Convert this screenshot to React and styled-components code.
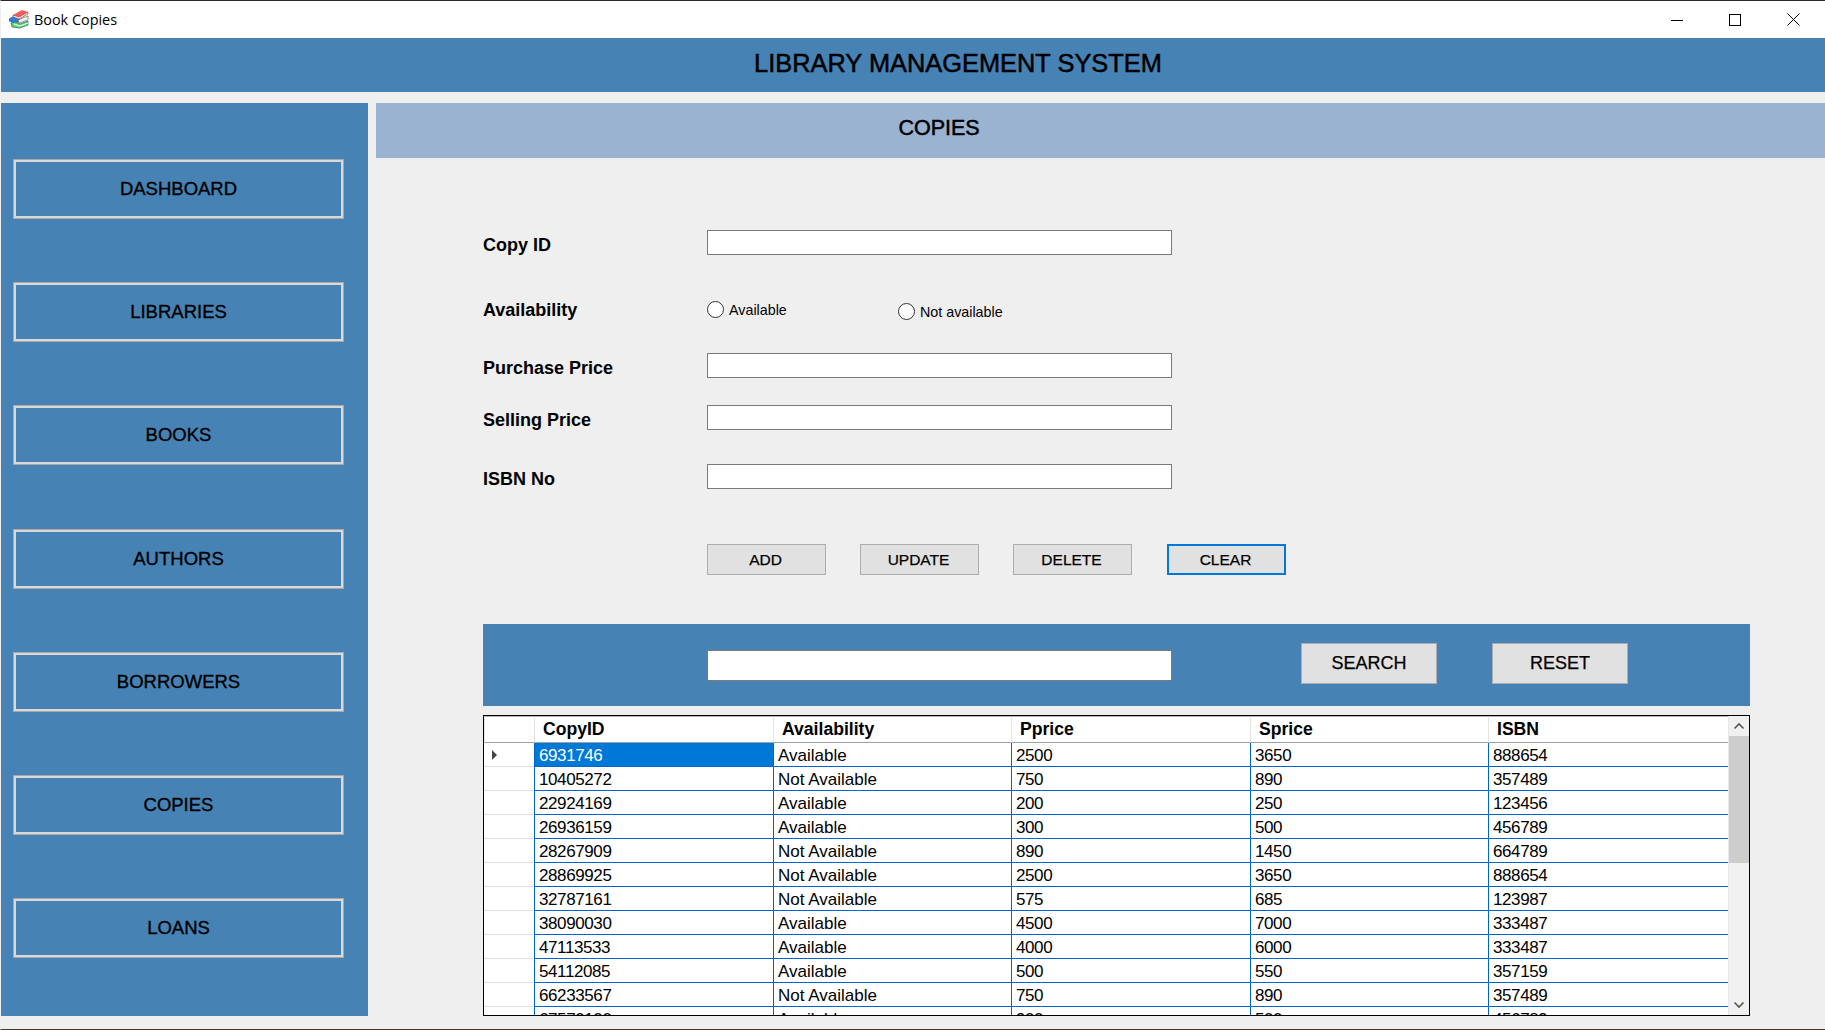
import React from "react";
import styled, { createGlobalStyle } from "styled-components";

const navItems = ["DASHBOARD", "LIBRARIES", "BOOKS", "AUTHORS", "BORROWERS", "COPIES", "LOANS"];

const copies = [
  ["6931746", "Available", "2500", "3650", "888654"],
  ["10405272", "Not Available", "750", "890", "357489"],
  ["22924169", "Available", "200", "250", "123456"],
  ["26936159", "Available", "300", "500", "456789"],
  ["28267909", "Not Available", "890", "1450", "664789"],
  ["28869925", "Not Available", "2500", "3650", "888654"],
  ["32787161", "Not Available", "575", "685", "123987"],
  ["38090030", "Available", "4500", "7000", "333487"],
  ["47113533", "Available", "4000", "6000", "333487"],
  ["54112085", "Available", "500", "550", "357159"],
  ["66233567", "Not Available", "750", "890", "357489"],
  ["67570100", "Available", "900", "500", "456789"],
];

const GlobalStyle = createGlobalStyle`
  html, body {
    margin: 0;
    padding: 0;
    background: #efefef;
  }
  * {
    box-sizing: border-box;
  }
`;

const Win = styled.div`
  width: 1825px;
  height: 1030px;
  overflow: hidden;
  background: #efefef;
  border-top: 1px solid #2b2b2b;
  border-bottom: 1px solid #4a3426;
  border-left: 1px solid #efefef;
  font-family: "Liberation Sans", Arial, sans-serif;
  color: #000;
`;

const TitleBar = styled.div`
  height: 37px;
  margin-left: -1px;
  background: #fff;
  display: flex;
  align-items: center;
  padding: 0 2px 0 9px;
`;

const TitleText = styled.span`
  font-family: "Open Sans", sans-serif;
  font-size: 14.4px;
  margin-left: 5px;
  flex: 1;
`;

const WinControl = styled.div`
  width: 58.5px;
  height: 37px;
  display: flex;
  align-items: center;
  justify-content: center;
`;

const Header = styled.div`
  height: 54px;
  background: #4682b4;
  display: flex;
  align-items: center;
  justify-content: center;
  padding: 0 0 3px 90px;
  font-size: 25.4px;
  -webkit-text-stroke: 0.5px #000;
`;

const Body = styled.div`
  display: flex;
  margin-top: 11px;
  gap: 8px;
`;

const Sidebar = styled.nav`
  width: 367px;
  height: 913px;
  background: #4682b4;
  padding: 56px 24px 0 12px;
  display: flex;
  flex-direction: column;
  gap: 63.2px;
`;

const NavButton = styled.button`
  height: 60px;
  background: transparent;
  border: 3px solid #d9d9d9;
  outline: 1px solid #a8a8a8;
  outline-offset: -1px;
  font-family: inherit;
  font-size: 18.5px;
  color: #000;
  padding: 0;
  -webkit-text-stroke: 0.35px #000;
`;

const Main = styled.main`
  flex: 1;
`;

const Banner = styled.div`
  height: 55px;
  background: #99b3d1;
  display: flex;
  align-items: center;
  justify-content: center;
  padding: 0 323px 5px 0;
  font-size: 21.5px;
  -webkit-text-stroke: 0.5px #000;
`;

const Content = styled.div`
  padding: 72px 75px 0 107px;
`;

const Form = styled.div`
  display: flex;
  flex-direction: column;
`;

const Row = styled.div`
  display: flex;
  align-items: center;
  height: ${(p) => p.$h}px;
  margin-top: ${(p) => p.$top || 0}px;
`;

const Label = styled.label`
  width: 224px;
  font-size: 18px;
  font-weight: 700;
  padding-top: ${(p) => p.$pad ?? 6}px;
`;

const TextInput = styled.input`
  width: 465px;
  height: ${(p) => p.$h || 25}px;
  background: #fff;
  border: 1px solid #7a7a7a;
  border-radius: 0;
  padding: 0;
  outline: none;
`;

const RadioGroup = styled.div`
  display: flex;
  align-items: center;
  width: 191px;
  transform: translateY(${(p) => p.$down || 0}px);
`;

const RadioDot = styled.span`
  width: 17px;
  height: 17px;
  border-radius: 50%;
  border: 1px solid #333;
  background: #fff;
`;

const RadioText = styled.span`
  font-size: 14.3px;
  margin-left: 5px;
`;

const ActionRow = styled.div`
  display: flex;
  gap: 34px;
  margin-top: 55px;
  margin-left: 224px;
`;

const ActionButton = styled.button`
  width: 119px;
  height: 31px;
  margin-left: ${(p) => (p.$focus ? 1 : 0)}px;
  background: #e1e1e1;
  border: ${(p) => (p.$focus ? "2px solid #0078d7" : "1px solid #adadad")};
  border-radius: 0;
  font-family: inherit;
  font-size: 15.5px;
  color: #000;
  padding: 0 2px 0 0;
  -webkit-text-stroke: 0.25px #000;
`;

const SearchPanel = styled.div`
  margin-top: 49px;
  height: 82px;
  background: #4682b4;
  display: flex;
  align-items: flex-start;
  padding-left: 224px;
`;

const SearchField = styled(TextInput)`
  margin-top: 26px;
  margin-right: 129px;
`;

const SearchButton = styled.button`
  width: 136px;
  height: 41px;
  margin-top: 19px;
  margin-right: 55px;
  background: #e1e1e1;
  border: 1px solid #adadad;
  border-radius: 0;
  font-family: inherit;
  font-size: 18px;
  color: #000;
  -webkit-text-stroke: 0.25px #000;
`;

const GridBox = styled.div`
  margin-top: 9px;
  height: 301px;
  border: 1px solid #000;
  background: #fff;
  display: flex;
  overflow: hidden;
`;

const TableClip = styled.div`
  width: 1244px;
  overflow: hidden;
`;

const Table = styled.table`
  border-collapse: separate;
  border-spacing: 0;
  table-layout: fixed;
  width: 1244px;
  font-size: 17px;
`;

const HeadCell = styled.th`
  height: 27px;
  padding: 0 0 1px 8px;
  text-align: left;
  font-size: 17.6px;
  font-weight: 700;
  background: #fff;
  border-top: 1px solid #b5b5b5;
  border-left: 1px solid #e4e4e4;
  border-bottom: 1px solid #a0a0a0;
`;

const Cell = styled.td`
  height: 24px;
  padding: 2px 0 0 4px;
  white-space: nowrap;
  letter-spacing: ${(p) => (p.$numeric ? "-0.4px" : "0")};
  border-left: 1px solid #0066cc;
  border-bottom: 1px solid #0066cc;
  background: ${(p) => (p.$selected ? "#0078d7" : "#fff")};
  color: ${(p) => (p.$selected ? "#fff" : "#000")};
`;

const RowHead = styled.td`
  height: 24px;
  padding: 0 0 0 6px;
  border-bottom: 1px solid #e0e0e0;
  background: #fff;
`;

const Arrow = styled.span`
  display: block;
  width: 0;
  height: 0;
  border-top: 5px solid transparent;
  border-bottom: 5px solid transparent;
  border-left: 5px solid #444;
  margin-left: 2px;
`;

const ScrollTrack = styled.div`
  flex: 1;
  background: #f0f0f0;
  display: flex;
  flex-direction: column;
  align-items: stretch;
  border-left: 1px solid #e8e8e8;
`;

const ScrollBtn = styled.div`
  height: 20px;
  display: flex;
  align-items: center;
  justify-content: center;
`;

const ScrollThumb = styled.div`
  height: 127px;
  background: #cdcdcd;
`;

const ScrollGap = styled.div`
  flex: 1;
`;

function BooksIcon() {
  return (
    <svg width="20" height="19" viewBox="0 0 20 19">
      <path d="M0 9L5 6L10 9L10 12L5 13L0 11Z" fill="#2a7de1" stroke="#1c4f90" strokeWidth="0.5" />
      <path d="M2 13L6 12L11 14L19 11L19 15L11 18L3 17Z" fill="#5cd97b" stroke="#2c6b3c" strokeWidth="0.7" />
      <path d="M5 14L11 16L19 13" fill="none" stroke="#fff" strokeWidth="1" />
      <path d="M9 10L19 6L19 10L10 13Z" fill="#f4f4f4" stroke="#555" strokeWidth="0.6" />
      <path d="M4 5L13 0L19 2L10 7Z" fill="#f25c5c" />
      <path d="M4 5L10 7L19 2L19 4L10 9L4 7Z" fill="#fbeaea" stroke="#b23a3a" strokeWidth="0.7" />
    </svg>
  );
}

export default function App() {
  return (
    <Win>
      <GlobalStyle />
      <TitleBar>
        <BooksIcon />
        <TitleText>Book Copies</TitleText>
        <WinControl>
          <svg width="12" height="12" viewBox="0 0 12 12"><path d="M0 6.5H12" stroke="#000" /></svg>
        </WinControl>
        <WinControl>
          <svg width="12" height="12" viewBox="0 0 12 12"><rect x="0.5" y="0.5" width="11" height="11" fill="none" stroke="#000" /></svg>
        </WinControl>
        <WinControl>
          <svg width="13" height="13" viewBox="0 0 13 13"><path d="M0.5 0.5L12.5 12.5M12.5 0.5L0.5 12.5" stroke="#000" /></svg>
        </WinControl>
      </TitleBar>
      <Header>LIBRARY MANAGEMENT SYSTEM</Header>
      <Body>
        <Sidebar>
          {navItems.map((item) => (
            <NavButton key={item}>{item}</NavButton>
          ))}
        </Sidebar>
        <Main>
          <Banner>COPIES</Banner>
          <Content>
            <Form>
              <Row $h={25}>
                <Label>Copy ID</Label>
                <TextInput />
              </Row>
              <Row $h={25} $top={42}>
                <Label $pad={1}>Availability</Label>
                <RadioGroup>
                  <RadioDot />
                  <RadioText>Available</RadioText>
                </RadioGroup>
                <RadioGroup $down={2}>
                  <RadioDot />
                  <RadioText>Not available</RadioText>
                </RadioGroup>
              </Row>
              <Row $h={25} $top={31}>
                <Label>Purchase Price</Label>
                <TextInput />
              </Row>
              <Row $h={25} $top={27}>
                <Label>Selling Price</Label>
                <TextInput />
              </Row>
              <Row $h={25} $top={34}>
                <Label>ISBN No</Label>
                <TextInput />
              </Row>
              <ActionRow>
                <ActionButton>ADD</ActionButton>
                <ActionButton>UPDATE</ActionButton>
                <ActionButton>DELETE</ActionButton>
                <ActionButton $focus>CLEAR</ActionButton>
              </ActionRow>
            </Form>
            <SearchPanel>
              <SearchField $h={31} />
              <SearchButton>SEARCH</SearchButton>
              <SearchButton>RESET</SearchButton>
            </SearchPanel>
            <GridBox>
              <TableClip>
                <Table>
                  <colgroup>
                    <col style={{ width: 50 }} />
                    <col style={{ width: 239 }} />
                    <col style={{ width: 238 }} />
                    <col style={{ width: 239 }} />
                    <col style={{ width: 238 }} />
                    <col style={{ width: 240 }} />
                  </colgroup>
                  <thead>
                    <tr>
                      <HeadCell />
                      <HeadCell>CopyID</HeadCell>
                      <HeadCell>Availability</HeadCell>
                      <HeadCell>Pprice</HeadCell>
                      <HeadCell>Sprice</HeadCell>
                      <HeadCell>ISBN</HeadCell>
                    </tr>
                  </thead>
                  <tbody>
                    {copies.map((copy, i) => (
                      <tr key={copy[0]}>
                        <RowHead>{i === 0 && <Arrow />}</RowHead>
                        {copy.map((value, j) => (
                          <Cell key={j} $numeric={j !== 1} $selected={i === 0 && j === 0}>{value}</Cell>
                        ))}
                      </tr>
                    ))}
                  </tbody>
                </Table>
              </TableClip>
              <ScrollTrack>
                <ScrollBtn>
                  <svg width="12" height="8" viewBox="0 0 12 8"><path d="M1.5 6.5L6 2L10.5 6.5" fill="none" stroke="#555" strokeWidth="1.6" /></svg>
                </ScrollBtn>
                <ScrollThumb />
                <ScrollGap />
                <ScrollBtn>
                  <svg width="12" height="8" viewBox="0 0 12 8"><path d="M1.5 1.5L6 6L10.5 1.5" fill="none" stroke="#555" strokeWidth="1.6" /></svg>
                </ScrollBtn>
              </ScrollTrack>
            </GridBox>
          </Content>
        </Main>
      </Body>
    </Win>
  );
}
